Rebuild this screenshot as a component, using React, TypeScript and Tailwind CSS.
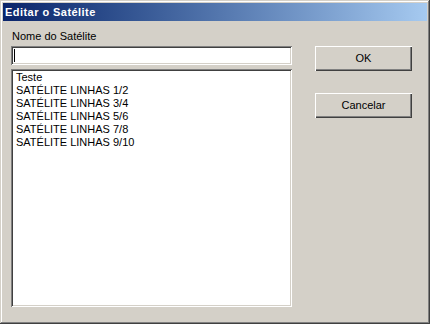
const items = [
  "Teste",
  "SATÉLITE LINHAS 1/2",
  "SATÉLITE LINHAS 3/4",
  "SATÉLITE LINHAS 5/6",
  "SATÉLITE LINHAS 7/8",
  "SATÉLITE LINHAS 9/10",
];

const Win2kButton = ({ label }: { label: string }) => (
  <button className="w-[97px] h-[25px] bg-[#d4d0c8] text-black text-[11px] leading-[13px] shadow-[inset_1px_1px_#ffffff,inset_-1px_-1px_#404040,inset_-2px_-2px_#808080] flex items-center justify-center">
    {label}
  </button>
);

export default function App() {
  return (
    <div
      className="w-[430px] h-[324px] bg-[#d4d0c8] p-[3px] flex flex-col shadow-[inset_-1px_-1px_#404040,inset_1px_1px_#d4d0c8,inset_-2px_-2px_#808080,inset_2px_2px_#ffffff]"
      style={{ fontFamily: '"Liberation Sans", Arial, sans-serif' }}
    >
      <div className="h-[18px] bg-gradient-to-r from-[#0a246a] to-[#a6caf0] flex items-center pl-[2px] text-white font-bold text-[11px] tracking-[0.45px]">
        Editar o Satélite
      </div>

      <div className="flex pt-[9px] pl-[8px]">
        <div className="w-[281px] flex flex-col">
          <label className="text-[11px] leading-[13px] text-black pl-[1px]">
            Nome do Satélite
          </label>
          <div className="mt-[3px] h-[19px] bg-white flex items-center pl-[3px] shadow-[inset_1px_1px_#808080,inset_-1px_-1px_#ffffff,inset_2px_2px_#404040,inset_-2px_-2px_#d4d0c8]">
            <span className="w-px h-[13px] bg-black" />
          </div>
          <div className="mt-[4px] h-[238px] bg-white pt-[2px] pl-[5px] shadow-[inset_1px_1px_#808080,inset_-1px_-1px_#ffffff,inset_2px_2px_#404040,inset_-2px_-2px_#d4d0c8]">
            {items.map((item) => (
              <div key={item} className="text-[11px] leading-[13px] text-black">
                {item}
              </div>
            ))}
          </div>
        </div>

        <div className="ml-[23px] flex flex-col gap-[22px] pt-[16px]">
          <Win2kButton label="OK" />
          <Win2kButton label="Cancelar" />
        </div>
      </div>
    </div>
  );
}
